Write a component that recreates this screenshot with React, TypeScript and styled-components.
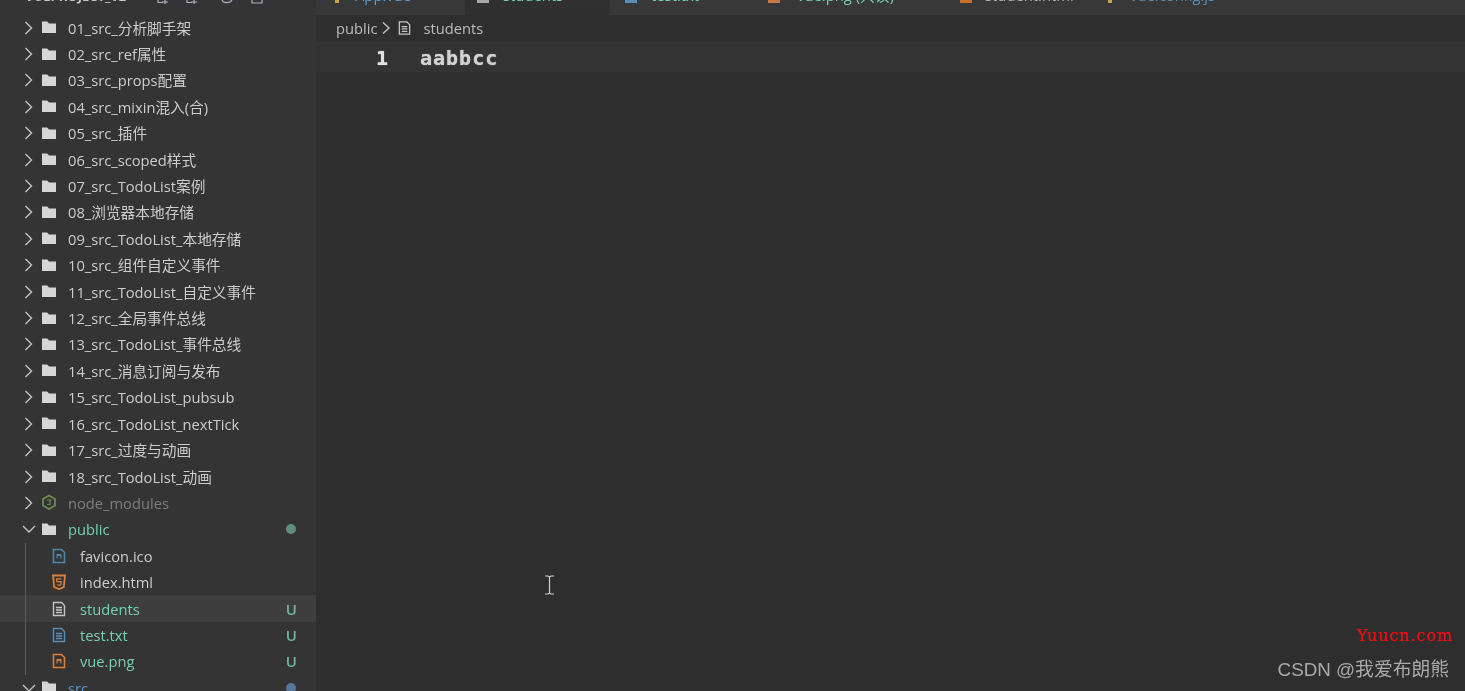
import React from 'react';
import styled, { createGlobalStyle } from 'styled-components';

const GlobalStyle = createGlobalStyle`
    html, body {
        margin: 0;
        padding: 0;
        height: 100%;
        overflow: hidden;
        background: #2e2e2e;
    }
    #root {
        height: 100%;
    }
`;

const FONT = `"Open Sans", "Noto Sans", "Noto Sans CJK SC", sans-serif`;

const Window = styled.div`
    position: relative;
    display: flex;
    width: 1465px;
    height: 691px;
    overflow: hidden;
    font-family: ${FONT};
    background: #2e2e2e;
    filter: blur(0.35px);
`;

const Sidebar = styled.aside`
    position: relative;
    flex: 0 0 316px;
    display: flex;
    flex-direction: column;
    background: #343434;
    overflow: hidden;
`;

const SideHeader = styled.div`
    flex: 0 0 14.4px;
    display: flex;
    align-items: flex-start;
    padding-left: 25px;
    overflow: hidden;
    white-space: nowrap;
`;

const SideTitle = styled.span`
    flex: 0 0 132px;
    margin-top: -14px;
    color: #c4c4c4;
    font-size: 13px;
    font-weight: 700;
    line-height: 20px;
`;

const HeaderIcon = styled.svg<{ $gap: number }>`
    flex: 0 0 14px;
    width: 14px;
    height: 4px;
    margin-right: ${(p) => p.$gap}px;
    fill: none;
    stroke: #a9b4c4;
    stroke-width: 1.2;
`;

const Tree = styled.div`
    display: flex;
    flex-direction: column;
`;

const Row = styled.div<{ $selected?: boolean }>`
    flex: 0 0 26.42px;
    display: flex;
    align-items: center;
    background: ${(p) => (p.$selected ? '#3e3e3e' : 'transparent')};
`;

const Chevron = styled.svg`
    flex: 0 0 16px;
    width: 16px;
    height: 16px;
    margin-left: 21px;
    fill: none;
    stroke: #c4c4c4;
    stroke-width: 1.4;
`;

const FolderIcon = styled.svg`
    flex: 0 0 16px;
    width: 16px;
    height: 16px;
    margin: -1px 0 0 4px;
    fill: #d6d6d6;
`;

const FileIcon = styled.svg`
    flex: 0 0 16px;
    width: 16px;
    height: 16px;
    margin-left: 51px;
`;

const NodeIcon = styled.svg`
    flex: 0 0 16px;
    width: 16px;
    height: 16px;
    margin: -1px 0 0 4px;
`;

const Label = styled.span<{ $tone?: string; $indent?: number }>`
    margin-left: ${(p) => p.$indent ?? 11}px;
    color: ${(p) => p.$tone ?? '#cccccc'};
    font-size: 14.7px;
    line-height: 20px;
    white-space: nowrap;
`;

const StatusDot = styled.span<{ $tone: string }>`
    margin-left: auto;
    margin-right: 20px;
    width: 10px;
    height: 10px;
    border-radius: 50%;
    background: ${(p) => p.$tone};
`;

const StatusLetter = styled.span`
    margin-left: auto;
    margin-right: 19px;
    color: #6fb59b;
    font-size: 15px;
    font-weight: 600;
`;

const IndentGuide = styled.div`
    position: absolute;
    left: 25px;
    top: 543px;
    width: 1px;
    height: 132px;
    background: #5a5a5a;
`;

const Editor = styled.main`
    flex: 1;
    display: flex;
    flex-direction: column;
    min-width: 0;
`;

const TabBar = styled.div`
    flex: 0 0 15px;
    display: flex;
    overflow: hidden;
    background: #383838;
`;

const Tab = styled.div<{ $active?: boolean; $width: number; $pad: number }>`
    flex: 0 0 ${(p) => p.$width}px;
    display: flex;
    align-items: flex-start;
    padding-left: ${(p) => p.$pad}px;
    box-sizing: border-box;
    overflow: hidden;
    background: ${(p) => (p.$active ? '#303030' : 'transparent')};
    white-space: nowrap;
`;

const TabSwatch = styled.span<{ $tone: string; $size?: number }>`
    flex: 0 0 ${(p) => p.$size ?? 12}px;
    height: 3px;
    background: ${(p) => p.$tone};
`;

const TabName = styled.span<{ $tone: string; $gap: number }>`
    margin: -15px 0 0 ${(p) => p.$gap}px;
    color: ${(p) => p.$tone};
    font-size: 14.8px;
    line-height: 20px;
`;

const TabMark = styled.span<{ $tone: string }>`
    margin: -15px 0 0 10px;
    color: ${(p) => p.$tone};
    font-size: 14px;
    line-height: 20px;
`;

const Breadcrumb = styled.div`
    flex: 0 0 27px;
    box-sizing: border-box;
    display: flex;
    align-items: center;
    padding: 0 0 2px 20px;
    color: #bcbcbc;
    font-size: 14.7px;
`;

const CrumbChevron = styled.svg`
    width: 12px;
    height: 14px;
    margin: 0 5px 0 3px;
    fill: none;
    stroke: #c4c4c4;
    stroke-width: 1.4;
`;

const CrumbFile = styled.svg`
    width: 15px;
    height: 16px;
    margin-right: 11px;
`;

const CodeLine = styled.div`
    flex: 0 0 30px;
    box-sizing: border-box;
    display: flex;
    align-items: center;
    padding-top: 2px;
    background: #333333;
    font-family: "DejaVu Sans Mono", "Liberation Mono", monospace;
    font-size: 20px;
    font-weight: 700;
    text-shadow: 0 0 1px currentColor;
`;

const LineNumber = styled.span`
    flex: 0 0 72px;
    text-align: right;
    color: #e2e2e2;
`;

const Code = styled.span`
    margin-left: 32px;
    color: #d2d2d2;
    letter-spacing: 1px;
`;

const Cursor = styled.svg`
    position: absolute;
    left: 543px;
    top: 574px;
    width: 13px;
    height: 22px;
    fill: none;
    stroke: #d0d0d0;
    stroke-width: 1.2;
`;

const Watermark = styled.div`
    position: absolute;
    right: 12px;
    top: 626px;
    color: #f00a12;
    font-family: "DejaVu Serif", "Liberation Serif", serif;
    font-size: 16px;
    letter-spacing: 0.9px;
    text-shadow: 0 0 0.6px #f00a12;
`;

const Credit = styled.div`
    position: absolute;
    right: 16px;
    top: 657px;
    color: #a9a9a9;
    font-family: "Liberation Sans", "Noto Sans CJK SC", sans-serif;
    font-size: 18.8px;
    line-height: 26px;
`;

const folders = [
    '01_src_分析脚手架',
    '02_src_ref属性',
    '03_src_props配置',
    '04_src_mixin混入(合)',
    '05_src_插件',
    '06_src_scoped样式',
    '07_src_TodoList案例',
    '08_浏览器本地存储',
    '09_src_TodoList_本地存储',
    '10_src_组件自定义事件',
    '11_src_TodoList_自定义事件',
    '12_src_全局事件总线',
    '13_src_TodoList_事件总线',
    '14_src_消息订阅与发布',
    '15_src_TodoList_pubsub',
    '16_src_TodoList_nextTick',
    '17_src_过度与动画',
    '18_src_TodoList_动画',
];

const RightChevron = () => (
    <Chevron viewBox="0 0 16 16">
        <path d="M4.500 2 10.500 8 4.500 14" />
    </Chevron>
);

const DownChevron = () => (
    <Chevron viewBox="0 0 16 16">
        <path d="M2 5 8 11l6-6" />
    </Chevron>
);

const Folder = () => (
    <FolderIcon viewBox="0 0 16 16">
        <path d="M1 2.500h5.200L8 4.500h7V14H1z" />
    </FolderIcon>
);

const DocIcon = ({ tone }: { tone: string }) => (
    <>
        <path d="M2.500 1.500h8l3 3v10h-11z" fill="none" stroke={tone} strokeWidth="1.400" />
        <path d="M5 6.500h6M5 9h6M5 11.500h6" stroke={tone} strokeWidth="1.400" />
    </>
);

const ImageGlyph = ({ tone }: { tone: string }) => (
    <>
        <path d="M2.500 1.500h8l3 3v10h-11z" fill="none" stroke={tone} strokeWidth="1.600" />
        <path d="M5.500 6h5v4.500h-1.200V8H6.700v2.500H5.500z" fill={tone} />
    </>
);

export default function App() {
    return (
        <>
            <GlobalStyle />
            <Window>
                <Sidebar>
                    <SideHeader>
                        <SideTitle>VUEPROJECT_V2</SideTitle>
                        <HeaderIcon $gap={15} viewBox="0 0 14 4">
                            <path d="M1 0v2.500h5M8 0v4M5 2h6" />
                        </HeaderIcon>
                        <HeaderIcon $gap={20} viewBox="0 0 14 4">
                            <path d="M1 0v2.500h5M8 0v4M5 2h6" />
                        </HeaderIcon>
                        <HeaderIcon $gap={16} viewBox="0 0 14 4">
                            <path d="M2 0c1 3.500 8 3.500 10 0" />
                        </HeaderIcon>
                        <HeaderIcon $gap={0} viewBox="0 0 14 4">
                            <path d="M2 0v3h10V0" />
                        </HeaderIcon>
                    </SideHeader>
                    <Tree>
                        {folders.map((name) => (
                            <Row key={name}>
                                <RightChevron />
                                <Folder />
                                <Label>{name}</Label>
                            </Row>
                        ))}
                        <Row>
                            <RightChevron />
                            <NodeIcon viewBox="0 0 16 16">
                                <path d="M8 1.500 14 5v6.500L8 15l-6-3.500V5z" fill="none" stroke="#6c8a4f" strokeWidth="1.800" />
                                <path d="M6 6h4.500M9 6v4.500H6" fill="none" stroke="#6c8a4f" strokeWidth="1.200" />
                            </NodeIcon>
                            <Label $tone="#7d7d7d">node_modules</Label>
                        </Row>
                        <Row>
                            <DownChevron />
                            <Folder />
                            <Label $tone="#74d0b2">public</Label>
                            <StatusDot $tone="#5f8f7b" />
                        </Row>
                        <Row>
                            <FileIcon viewBox="0 0 16 16">
                                <ImageGlyph tone="#4f86a8" />
                            </FileIcon>
                            <Label $indent={13}>favicon.ico</Label>
                        </Row>
                        <Row>
                            <FileIcon viewBox="0 0 16 16">
                                <path d="M2 1.500h12l-1.200 11.500L8 15l-4.800-2z" fill="none" stroke="#d9813c" strokeWidth="1.800" />
                                <path d="M10.500 4.800h-5l.3 2.900h4.400l-.3 3-1.900.7-1.900-.7" fill="none" stroke="#d9813c" strokeWidth="1.200" />
                            </FileIcon>
                            <Label $indent={13}>index.html</Label>
                        </Row>
                        <Row $selected>
                            <FileIcon viewBox="0 0 16 16">
                                <DocIcon tone="#c4c4c4" />
                            </FileIcon>
                            <Label $tone="#74d0b2" $indent={13}>students</Label>
                            <StatusLetter>U</StatusLetter>
                        </Row>
                        <Row>
                            <FileIcon viewBox="0 0 16 16">
                                <DocIcon tone="#5a8db5" />
                            </FileIcon>
                            <Label $tone="#74d0b2" $indent={13}>test.txt</Label>
                            <StatusLetter>U</StatusLetter>
                        </Row>
                        <Row>
                            <FileIcon viewBox="0 0 16 16">
                                <ImageGlyph tone="#d9813c" />
                            </FileIcon>
                            <Label $tone="#74d0b2" $indent={13}>vue.png</Label>
                            <StatusLetter>U</StatusLetter>
                        </Row>
                        <Row>
                            <DownChevron />
                            <Folder />
                            <Label $tone="#5b94c9">src</Label>
                            <StatusDot $tone="#55789a" />
                        </Row>
                    </Tree>
                    <IndentGuide />
                </Sidebar>
                <Editor>
                    <TabBar>
                        <Tab $width={149} $pad={19}>
                            <TabSwatch $tone="#c9a24a" $size={4} />
                            <TabName $tone="#5a9fd4" $gap={16}>App.vue</TabName>
                            <TabMark $tone="#5a9fd4">M</TabMark>
                        </Tab>
                        <Tab $active $width={145} $pad={12}>
                            <TabSwatch $tone="#a8a8a8" />
                            <TabName $tone="#74d0b2" $gap={14}>students</TabName>
                            <TabMark $tone="#74d0b2">U</TabMark>
                            <TabMark $tone="#a8a8a8">×</TabMark>
                        </Tab>
                        <Tab $width={145} $pad={15}>
                            <TabSwatch $tone="#5a8db5" />
                            <TabName $tone="#74d0b2" $gap={14}>test.txt</TabName>
                            <TabMark $tone="#74d0b2">U</TabMark>
                        </Tab>
                        <Tab $width={190} $pad={13}>
                            <TabSwatch $tone="#c47a45" />
                            <TabName $tone="#74d0b2" $gap={17}>vue.png (只读)</TabName>
                            <TabMark $tone="#74d0b2">U</TabMark>
                        </Tab>
                        <Tab $width={150} $pad={15}>
                            <TabSwatch $tone="#c9702e" />
                            <TabName $tone="#b0b0b0" $gap={13}>student.html</TabName>
                        </Tab>
                        <Tab $width={200} $pad={13}>
                            <TabSwatch $tone="#c9a24a" $size={4} />
                            <TabName $tone="#5a8db5" $gap={18}>vue.config.js</TabName>
                        </Tab>
                    </TabBar>
                    <Breadcrumb>
                        public
                        <CrumbChevron viewBox="0 0 12 14">
                            <path d="M3 1.500 9 7 3 12.500" />
                        </CrumbChevron>
                        <CrumbFile viewBox="0 0 16 16">
                            <DocIcon tone="#c4c4c4" />
                        </CrumbFile>
                        students
                    </Breadcrumb>
                    <CodeLine>
                        <LineNumber>1</LineNumber>
                        <Code>aabbcc</Code>
                    </CodeLine>
                </Editor>
                <Cursor viewBox="0 0 13 22">
                    <path d="M2 2h3l1.500 1L8 2h3M6.500 3v16M2 20h3l1.500-1L8 20h3" />
                </Cursor>
                <Watermark>Yuucn.com</Watermark>
                <Credit>CSDN @我爱布朗熊</Credit>
            </Window>
        </>
    );
}
